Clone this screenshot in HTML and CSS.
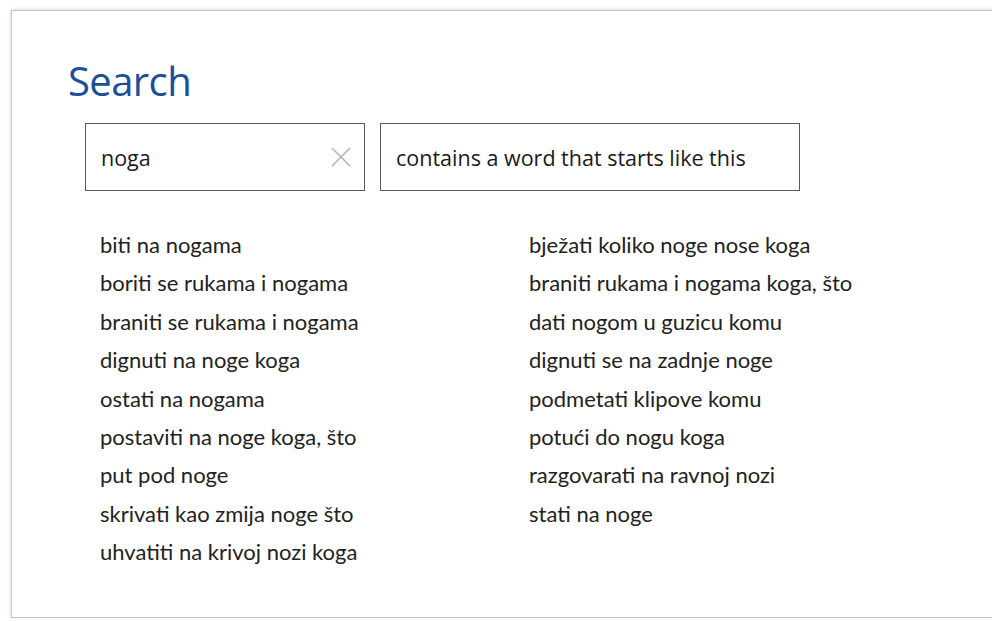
FILE: index.html
```html
<!DOCTYPE html>
<html lang="hr">
<head>
<meta charset="utf-8">
<title>Search</title>
<link rel="stylesheet" href="styles.css">
</head>
<body>
<main class="panel">
  <h1 class="title">Search</h1>
  <div class="controls">
    <div class="field field-query">
      <span class="field-text">noga</span>
      <button class="clear" type="button" aria-label="Clear">
        <svg viewBox="0 0 20 20" width="20" height="20"><path d="M1 1L19 19M19 1L1 19" stroke="#b4b4b4" stroke-width="1.6" fill="none"/></svg>
      </button>
    </div>
    <div class="field field-mode">
      <span class="field-text">contains a word that starts like this</span>
    </div>
  </div>
  <div class="results">
    <ul class="result-col">
      <li>biti na nogama</li>
      <li>boriti se rukama i nogama</li>
      <li>braniti se rukama i nogama</li>
      <li>dignuti na noge koga</li>
      <li>ostati na nogama</li>
      <li>postaviti na noge koga, što</li>
      <li>put pod noge</li>
      <li>skrivati kao zmija noge što</li>
      <li>uhvatiti na krivoj nozi koga</li>
    </ul>
    <ul class="result-col">
      <li>bježati koliko noge nose koga</li>
      <li>braniti rukama i nogama koga, što</li>
      <li>dati nogom u guzicu komu</li>
      <li>dignuti se na zadnje noge</li>
      <li>podmetati klipove komu</li>
      <li>potući do nogu koga</li>
      <li>razgovarati na ravnoj nozi</li>
      <li>stati na noge</li>
    </ul>
  </div>
</main>
</body>
</html>
```

FILE: styles.css
```css
* { box-sizing: border-box; }

html, body {
  margin: 0;
  background: #ffffff;
  overflow: hidden;
}

body {
  padding: 10px 0 0 11px;
  font-family: "Lato", "Open Sans", sans-serif;
  color: #222222;
}

.panel {
  width: 1000px;
  height: 608px;
  border: 1px solid #c6c6c6;
  box-shadow: 0 0 4px rgba(0, 0, 0, 0.18);
  background: #ffffff;
  padding: 42px 0 0 56px;
}

.title {
  margin: 0;
  font-family: "Open Sans", sans-serif;
  font-weight: 400;
  font-size: 40px;
  line-height: 56px;
  color: #1b4f9c;
  letter-spacing: -0.6px;
}

.controls {
  display: flex;
  gap: 15px;
  margin: 14px 0 0 17px;
}

.field {
  height: 68px;
  border: 1.5px solid #5a5a5a;
  display: flex;
  align-items: center;
  padding: 0 15px;
  font-family: "Open Sans", sans-serif;
  font-size: 21.5px;
  color: #1a1a1a;
}

.field-query {
  width: 280px;
  justify-content: space-between;
}

.field-mode {
  width: 420px;
}

.clear {
  border: 0;
  background: none;
  padding: 0;
  margin-right: -2px;
  display: flex;
}

.results {
  display: flex;
  margin: 35px 0 0 32px;
}

.result-col {
  list-style: none;
  margin: 0;
  padding: 0;
  width: 429px;
}

.result-col li {
  font-size: 22px;
  line-height: 38.4px;
  color: #222222;
}
```
